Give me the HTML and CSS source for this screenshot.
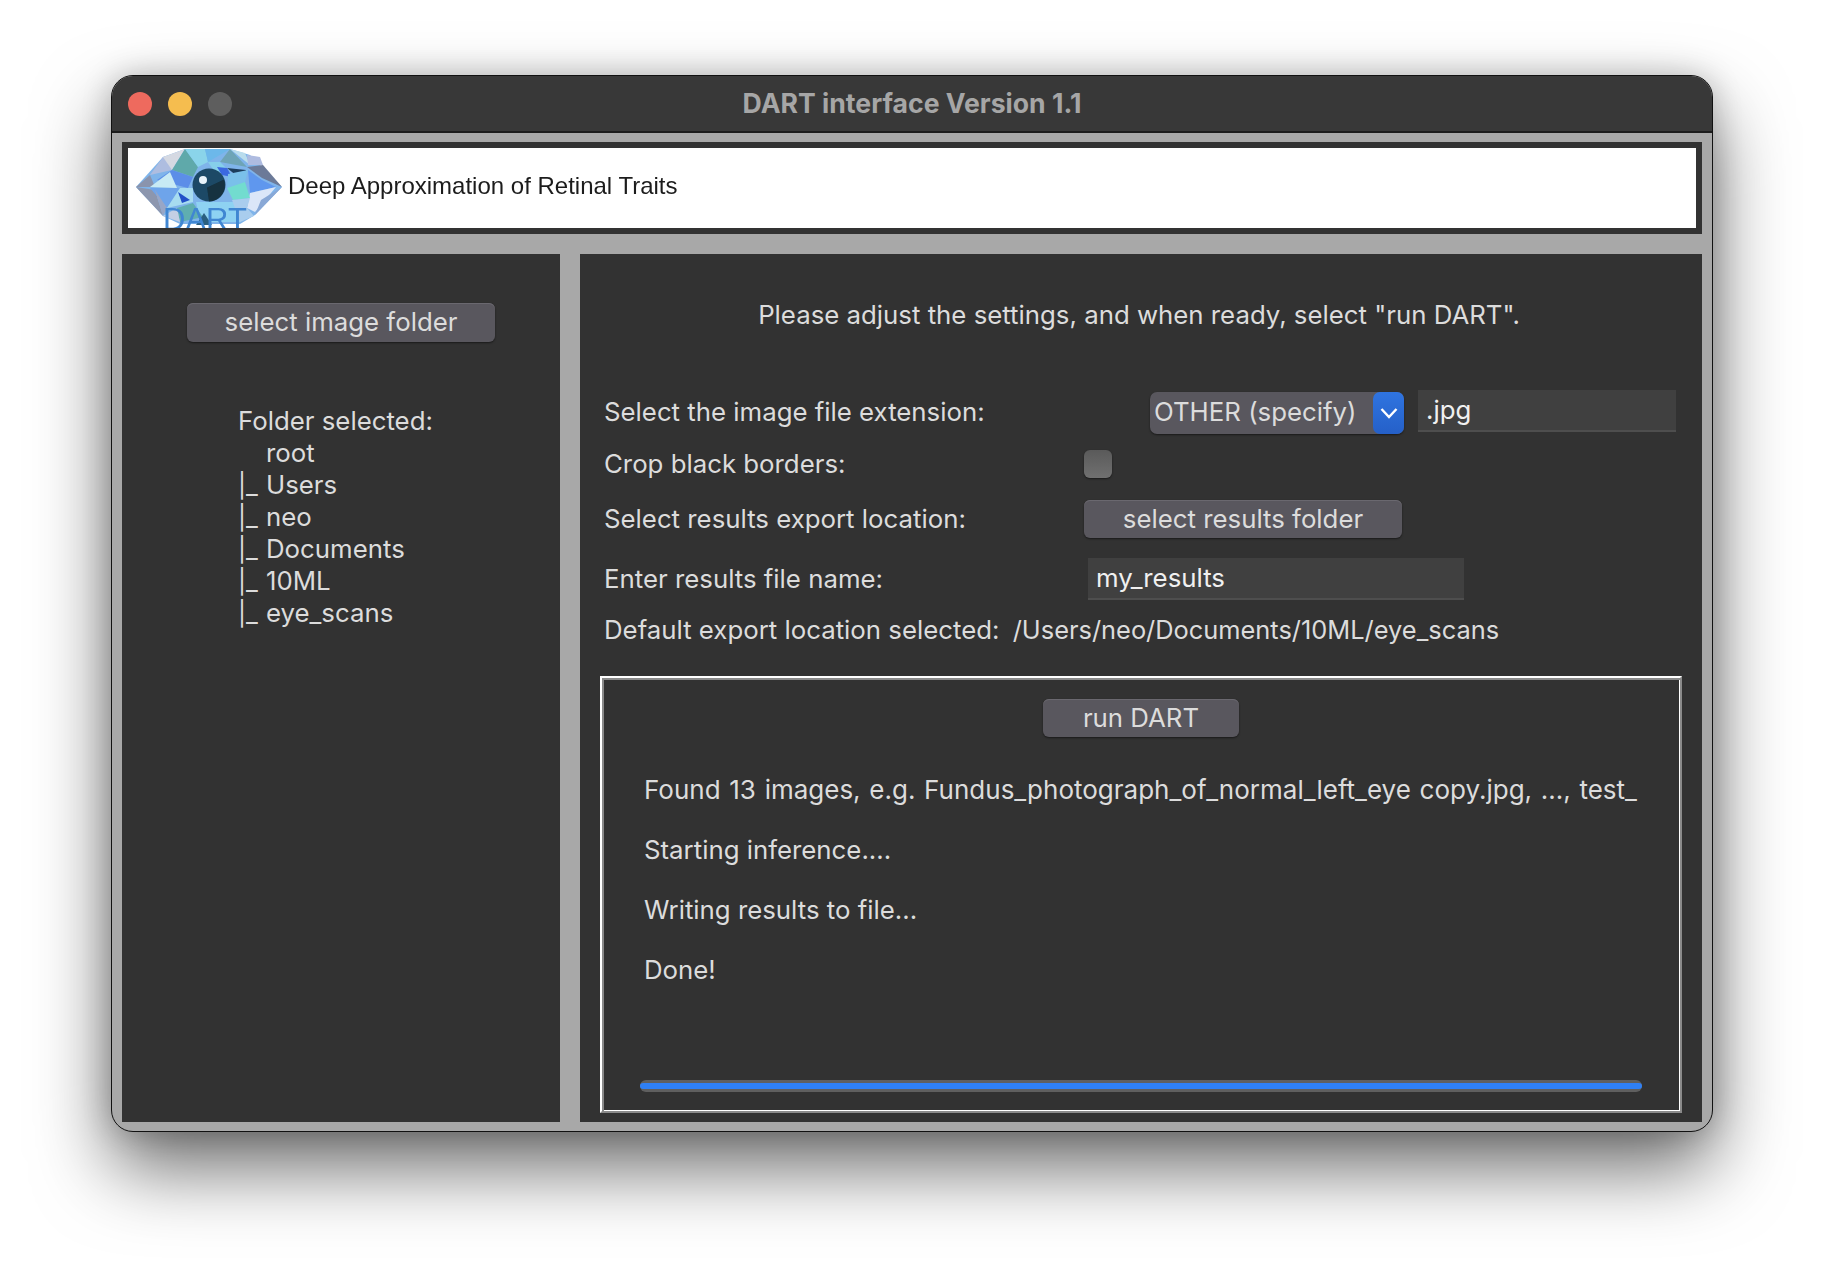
FILE: index.html
```html
<!DOCTYPE html>
<html lang="en">
<head>
    <meta charset="UTF-8">
    <title>DART interface Version 1.1</title>
    <link rel="stylesheet" href="styles.css">
</head>
<body>
    <div class="window">
        <div class="titlebar">
            <div class="lights">
                <span class="light red"></span>
                <span class="light yellow"></span>
                <span class="light off"></span>
            </div>
            <div class="title">DART interface Version 1.1</div>
        </div>

        <div class="banner">
            <svg class="logo" viewBox="0 0 150 80" width="150" height="80">
                <defs>
                    <filter id="soft"><feGaussianBlur stdDeviation="0.7"/></filter>
                    <filter id="softer"><feGaussianBlur stdDeviation="0.4"/></filter>
                </defs>
                <g filter="url(#soft)">
                    <polygon fill="#7fb4ea" points="0,39 27,9 49,1 94,1 114,7 146,39 119,67 104,76 44,76 27,68"/>
                    <polygon fill="#8a94ad" points="0,39 14,27 19,39"/>
                    <polygon fill="#8c96ae" points="0,39 19,42 27,68"/>
                    <polygon fill="#aebde0" points="14,27 27,9 37,7 36,22"/>
                    <polygon fill="#d5d9e2" points="27,9 49,1 36,22"/>
                    <polygon fill="#5fa9aa" points="49,1 36,22 57,29 62,19"/>
                    <polygon fill="#8ad4ea" points="49,1 69,1 72,14 62,19"/>
                    <polygon fill="#6cb8ea" points="69,1 94,1 72,14"/>
                    <polygon fill="#6ea4b6" points="84,14 94,1 111,19"/>
                    <polygon fill="#b9dcec" points="94,1 109,5 114,17"/>
                    <polygon fill="#86cfea" points="72,14 84,14 92,22 80,26"/>
                    <polygon fill="#1e3c5c" points="91,20 110,22 106,32"/>
                    <polygon fill="#3a68e0" points="81,19 91,20 96,29 86,27"/>
                    <polygon fill="#6c7a98" points="111,19 127,17 146,39 126,30"/>
                    <polygon fill="#aebbe0" points="111,7 124,9 127,17 112,17"/>
                    <polygon fill="#5f97ee" points="112,22 126,32 140,39 114,45"/>
                    <polygon fill="#dbe6f8" points="114,45 140,39 119,64 111,60"/>
                    <polygon fill="#89a8d6" points="146,39 119,67 125,52"/>
                    <polygon fill="#7ac0ea" points="92,26 112,22 109,34 91,40"/>
                    <polygon fill="#72dccf" points="91,40 109,34 114,50 97,52"/>
                    <polygon fill="#8ed2f2" points="60,54 107,54 111,60 104,74 64,74"/>
                    <polygon fill="#a9cdee" points="96,52 114,50 111,60 118,68 104,74"/>
                    <polygon fill="#5b8ee8" points="36,22 57,29 52,40 21,32"/>
                    <polygon fill="#c8eaf4" points="14,39 34,24 41,40"/>
                    <polygon fill="#6ea4ea" points="14,40 44,40 31,60"/>
                    <polygon fill="#a7dcf0" points="44,40 57,40 57,54 31,60"/>
                    <polygon fill="#2050c8" points="42,44 54,52 46,55"/>
                    <polygon fill="#5faeb0" points="41,60 57,55 67,69 44,74"/>
                    <polygon fill="#98a6c6" points="19,42 31,60 27,68"/>
                    <polygon fill="#c4cfe4" points="27,68 41,60 44,74"/>
                    <polygon fill="#2c5f80" points="68,65 76,77 60,77"/>
                    <circle cx="73" cy="37" r="16.5" fill="#1d4a66"/>
                    <path d="M73 53.5a16.5 16.5 0 0 0 15-22l-17 8z" fill="#14303f"/>
                    <circle cx="67" cy="32" r="4" fill="#e8f3fa"/>
                </g>
                <text class="logo-text" x="27" y="82" filter="url(#softer)">DART</text>
            </svg>
            <div class="tagline">Deep Approximation of Retinal Traits</div>
        </div>

        <div class="panels">
            <div class="panel left-panel">
                <button class="btn image-btn" type="button">select image folder</button>
                <div class="tree">
                    <div>Folder selected:</div>
                    <div class="node">root</div>
                    <div class="node"><span class="pipe"><span class="bar">|</span>_</span>Users</div>
                    <div class="node"><span class="pipe"><span class="bar">|</span>_</span>neo</div>
                    <div class="node"><span class="pipe"><span class="bar">|</span>_</span>Documents</div>
                    <div class="node"><span class="pipe"><span class="bar">|</span>_</span>10ML</div>
                    <div class="node"><span class="pipe"><span class="bar">|</span>_</span>eye_scans</div>
                </div>
            </div>

            <div class="panel right-panel">
                <div class="intro">Please adjust the settings, and when ready, select "run DART".</div>

                <div class="row row-ext">
                    <label class="label">Select the image file extension:</label>
                    <div class="dropdown">
                        <span class="dropdown-text">OTHER (specify)</span>
                        <span class="dropdown-arrow">
                            <svg viewBox="0 0 18 12" width="18" height="12"><path d="M1.5 2L9 10l7.5-8" fill="none" stroke="#fff" stroke-width="2.4"/></svg>
                        </span>
                    </div>
                    <input class="entry ext-entry" type="text" value=".jpg">
                </div>
                <div class="row row-crop">
                    <label class="label">Crop black borders:</label>
                    <span class="checkbox"></span>
                </div>
                <div class="row row-export">
                    <label class="label">Select results export location:</label>
                    <button class="btn results-btn" type="button">select results folder</button>
                </div>
                <div class="row row-name">
                    <label class="label">Enter results file name:</label>
                    <input class="entry name-entry" type="text" value="my_results">
                </div>
                <div class="row row-default">Default export location selected:&nbsp; <span class="path">/Users/neo/Documents/10ML/eye_scans</span></div>

                <div class="log">
                    <button class="btn run-btn" type="button">run DART</button>
                    <div class="log-lines">
                        <p class="log-first">Found 13 images, e.g. Fundus_photograph_of_normal_left_eye copy.jpg, ..., test_</p>
                        <p>Starting inference....</p>
                        <p>Writing results to file...</p>
                        <p>Done!</p>
                    </div>
                    <div class="progress"><div class="progress-fill"></div></div>
                </div>
            </div>
        </div>
    </div>
</body>
</html>
```

FILE: styles.css
```css
/* Reset */
* {
    margin: 0;
    padding: 0;
    box-sizing: border-box;
}

body {
    background: #fff;
    width: 1824px;
    height: 1280px;
    padding: 75px 0 0 111px;
    overflow: hidden;
    font-family: Inter, 'Noto Sans', sans-serif;
    font-size: 25.8px;
    color: #dcdcdc;
}

/* Window */
.window {
    width: 1602px;
    height: 1057px;
    background: #a8a8a8;
    border: 1px solid #111;
    border-radius: 22px;
    overflow: hidden;
    box-shadow: 0 36px 76px rgba(0, 0, 0, 0.58), 0 0 30px rgba(0, 0, 0, 0.2);
}

.titlebar {
    height: 57px;
    background: #383838;
    border-bottom: 2px solid #1c1c1c;
    display: flex;
    align-items: center;
    position: relative;
    padding-left: 16px;
}

.lights {
    display: flex;
    gap: 16px;
}

.light {
    width: 24px;
    height: 24px;
    border-radius: 50%;
}

.red { background: #ee6a5e; }
.yellow { background: #f5bd4f; }
.off { background: #5e5e5e; }

.title {
    position: absolute;
    left: 0;
    right: 0;
    padding-bottom: 2px;
    text-align: center;
    font-size: 26.6px;
    font-weight: 700;
    color: #a6a6a6;
}

/* Banner */
.banner {
    height: 92px;
    margin: 9px 10px 0;
    border: 6px solid #323232;
    background: #fff;
    display: flex;
    align-items: center;
    padding-left: 8px;
}

.logo {
    flex: none;
    height: 80px;
}

.logo-text {
    font-family: 'Liberation Sans', sans-serif;
    font-size: 31px;
    fill: #3f86d2;
}

.tagline {
    margin: 0 0 5px 2px;
    font-family: 'Liberation Sans', sans-serif;
    font-size: 24px;
    color: #1c1c1c;
    filter: blur(0.6px);
}

/* Panels */
.panels {
    display: flex;
    gap: 20px;
    margin: 20px 10px 0;
    height: 868px;
}

.panel {
    background: #323232;
}

.left-panel {
    width: 438px;
    padding-top: 49px;
}

.right-panel {
    flex: 1;
    padding-top: 45px;
}

/* Buttons */
.btn {
    display: block;
    font-family: inherit;
    font-size: 25.8px;
    color: #dcdcdc;
    background: #59575e;
    border: none;
    border-radius: 6px;
    padding-bottom: 2px;
    box-shadow: 0 1px 2px rgba(0, 0, 0, 0.5), inset 0 1px 0 #6a686f;
}

.image-btn {
    width: 308px;
    height: 39px;
    margin: 0 auto;
}

.results-btn {
    width: 318px;
    height: 38px;
}

.run-btn {
    width: 196px;
    height: 38px;
    margin: 0 auto;
}

/* Folder tree */
.tree {
    margin: 63px 0 0 116px;
    line-height: 32px;
}

.node {
    padding-left: 28px;
    position: relative;
}

.pipe {
    position: absolute;
    left: 0;
}

.bar {
    font-size: 24px;
}

/* Settings */
.intro {
    text-align: center;
    line-height: 32px;
    padding-right: 4px;
}

.row {
    display: flex;
    align-items: center;
    padding-left: 24px;
}

.label {
    width: 480px;
    flex: none;
    padding-bottom: 2px;
}

.row-ext {
    height: 44px;
    margin-top: 59px;
}

.row-crop {
    height: 28px;
    margin-top: 16px;
}

.row-export {
    height: 38px;
    margin-top: 22px;
}

.row-name {
    height: 42px;
    margin-top: 20px;
}

.row-default {
    height: 32px;
    margin-top: 13px;
}

.path {
    margin-left: 6px;
    font-size: 25.4px;
}

.dropdown {
    width: 254px;
    height: 42px;
    margin: 2px 0 0 66px;
    background: #59575e;
    border-radius: 7px;
    display: flex;
    align-items: center;
    justify-content: space-between;
    padding-left: 4px;
    box-shadow: 0 1px 2px rgba(0, 0, 0, 0.5);
}

.dropdown-text {
    padding-bottom: 3px;
}

.dropdown-arrow {
    width: 31px;
    height: 42px;
    background: linear-gradient(#2f74e0, #2560c8);
    border-radius: 7px;
    display: flex;
    align-items: center;
    justify-content: center;
}

.entry {
    height: 42px;
    font-family: inherit;
    font-size: 25.8px;
    color: #f0f0f0;
    background: #404040;
    border: none;
    border-bottom: 2px solid #4e4e4e;
    outline: none;
    padding: 0 0 2px 8px;
}

.ext-entry {
    width: 258px;
    margin: -2px 0 0 14px;
}

.name-entry {
    width: 376px;
    margin-left: 4px;
}

.checkbox {
    width: 28px;
    height: 28px;
    border-radius: 6px;
    background: linear-gradient(#5a5a5a, #707070);
    box-shadow: 0 1px 2px rgba(0, 0, 0, 0.5);
}

/* Log box */
.log {
    height: 437px;
    margin: 31px 20px 0;
    border: 2px solid;
    border-color: #fff #8a8a8a #8a8a8a #fff;
    box-shadow: inset 2px 2px 0 #8a8a8a, inset -1px -1px 0 #fff;
    padding: 21px 38px 19px;
    display: flex;
    flex-direction: column;
}

.log-lines {
    margin-top: 23px;
}

.log-lines p {
    height: 60px;
    line-height: 60px;
    margin-left: 4px;
    white-space: nowrap;
}

.log-lines .log-first {
    font-size: 26px;
    word-spacing: 1.4px;
}

.progress {
    margin-top: auto;
    height: 12px;
    border-radius: 6px;
    background: #5f5f5f;
    display: flex;
    align-items: center;
}

.progress-fill {
    width: 100%;
    height: 6px;
    border-radius: 3px;
    background: #2f80f5;
}
```
